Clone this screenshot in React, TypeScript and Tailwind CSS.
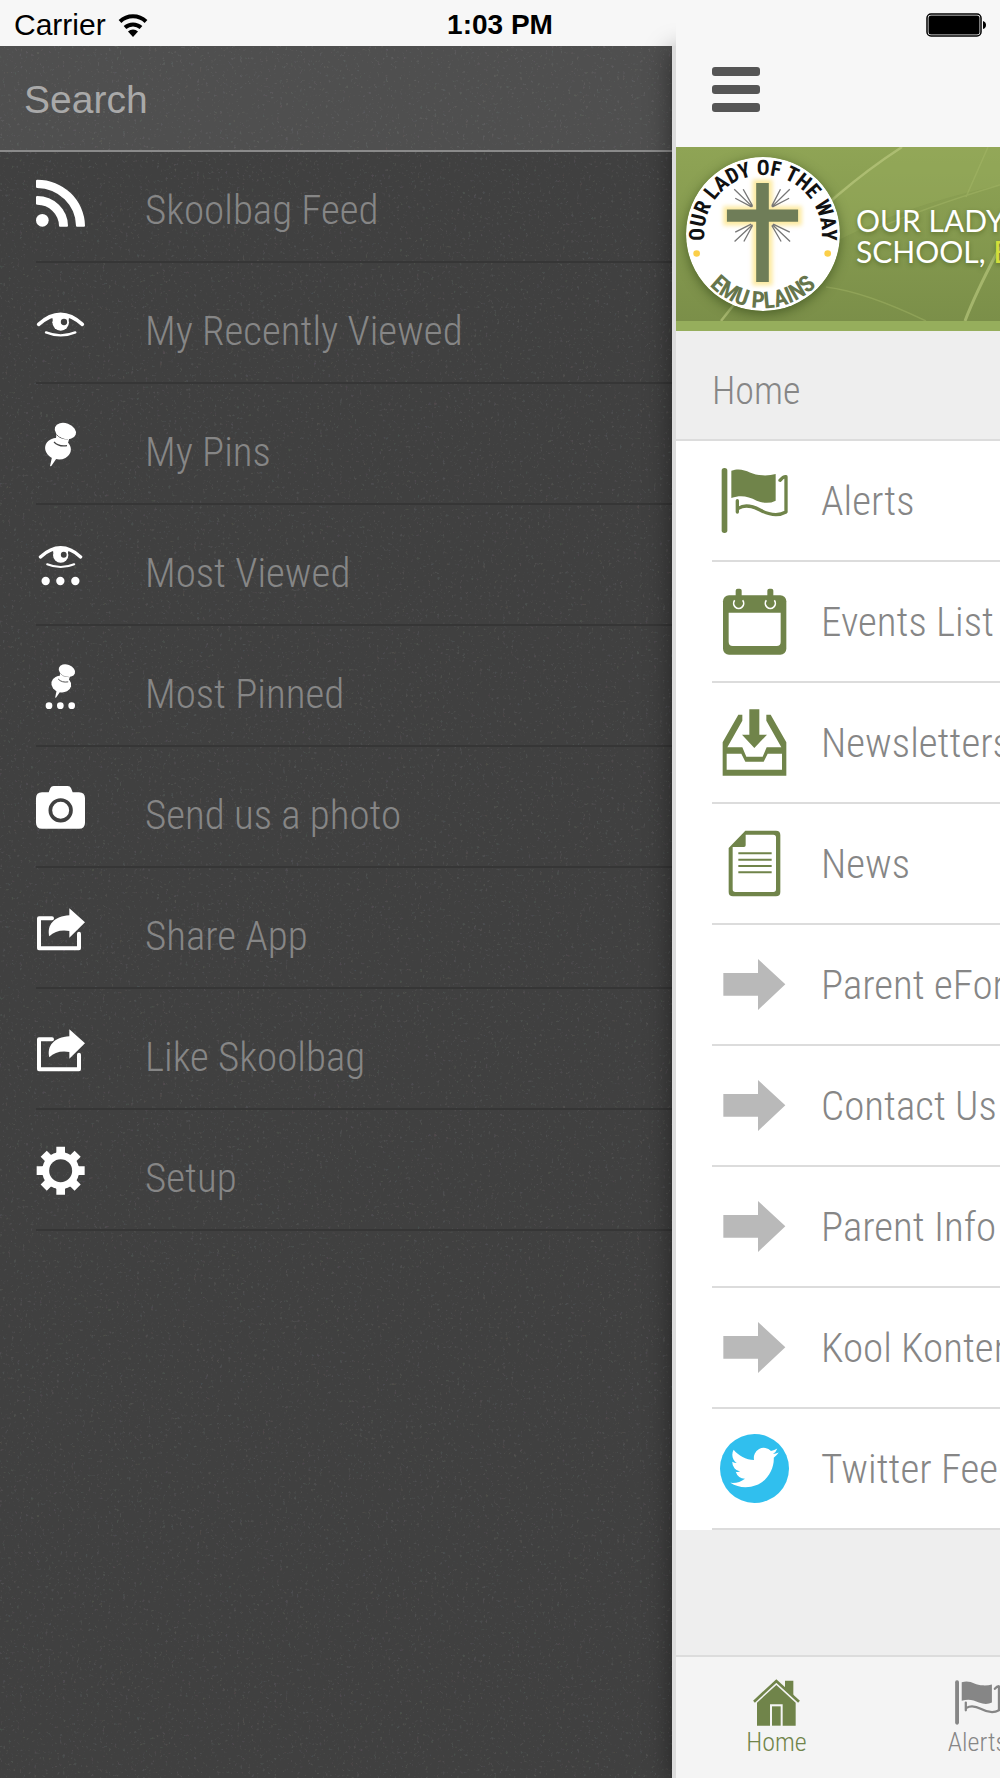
import type { ReactNode } from "react";

type Item = { label: string; icon: ReactNode };

const MenuSvg = ({ children }: { children: ReactNode }) => (
  <svg viewBox="0 0 147 150" className="w-[49px] h-[50px] shrink-0" fill="#fff" aria-hidden="true">
    {children}
  </svg>
);

const ListSvg = ({ children }: { children: ReactNode }) => (
  <svg viewBox="0 0 207 207" className="w-[69px] h-[69px]" fill="#70844a" aria-hidden="true">
    {children}
  </svg>
);

const EyeShape = () => (
  <>
    <path d="M8 79Q74 20 139 79" fill="none" stroke="#fff" strokeWidth="11" strokeLinecap="round" />
    <path d="M47 52Q74 40 101 52L97 68H51z" />
    <circle cx="74" cy="73" r="25" />
    <circle cx="84" cy="72" r="9.5" fill="#404040" />
    <path d="M30 103Q74 121 118 103" fill="none" stroke="#fff" strokeWidth="7" strokeLinecap="round" />
  </>
);

const PinShape = () => (
  <>
    <path d="M48 114L42 142L46 141L62 118z" />
    <ellipse cx="66" cy="89" rx="39" ry="32" transform="rotate(12 66 89)" />
    <path d="M62 40L101 54L94 79Q74 84 52 70L60 58z" />
    <path d="M54 69Q68 84 93 80" fill="none" stroke="#404040" strokeWidth="3.5" />
    <path d="M62 47Q72 60 96 60" fill="none" stroke="#404040" strokeWidth="2.5" />
    <ellipse cx="88" cy="36" rx="33" ry="23" transform="rotate(20 88 36)" />
  </>
);

const RssIcon = () => (
  <MenuSvg>
    <circle cx="19" cy="130" r="19" />
    <path d="M0 11q0-3 4-3A143 141 0 0 1 147 146q0 3-3 3h-21q-3 0-3-3A117 114 0 0 0 4 33q-4 0-4-3z" />
    <path d="M0 60q0-3 4-3A92 90 0 0 1 96 146q0 3-3 3h-21q-3 0-3-3A66 64 0 0 0 4 83q-4 0-4-3z" />
  </MenuSvg>
);

const EyeIcon = () => (
  <MenuSvg>
    <EyeShape />
  </MenuSvg>
);

const PinIcon = () => (
  <MenuSvg>
    <PinShape />
  </MenuSvg>
);

const MostViewedIcon = () => (
  <MenuSvg>
    <g transform="translate(6 -22) scale(.92)">
      <EyeShape />
    </g>
    <circle cx="29" cy="123" r="12.5" />
    <circle cx="73" cy="123" r="12.5" />
    <circle cx="118" cy="123" r="12.5" />
  </MenuSvg>
);

const MostPinnedIcon = () => (
  <MenuSvg>
    <g transform="translate(25 1) scale(.77)">
      <PinShape />
    </g>
    <circle cx="39" cy="134" r="10" />
    <circle cx="73" cy="134" r="10" />
    <circle cx="107" cy="134" r="10" />
  </MenuSvg>
);

const CameraIcon = () => (
  <MenuSvg>
    <path d="M18 31H38L43 18Q46 12 53 12H95Q102 12 105 18L110 31H129Q147 31 147 49V122Q147 140 129 140H18Q0 140 0 122V49Q0 31 18 31z" />
    <circle cx="74" cy="85" r="31" stroke="#404040" strokeWidth="11" />
  </MenuSvg>
);

const ShareIcon = () => (
  <MenuSvg>
    <path d="M48 46H9V136H129V92" fill="none" stroke="#fff" strokeWidth="12" strokeLinecap="round" strokeLinejoin="round" />
    <path d="M100 16L147 58L100 104V84Q62 78 40 100C32 66 54 40 100 37z" />
  </MenuSvg>
);

const GearIcon = () => (
  <MenuSvg>
    <circle cx="74" cy="77" r="45" fill="none" stroke="#fff" strokeWidth="21" />
    {[0, 45, 90, 135, 180, 225, 270, 315].map((angle) => (
      <path key={angle} d="M61 5H87V22L93 36H55L61 22z" transform={`rotate(${angle} 74 77)`} />
    ))}
  </MenuSvg>
);

const FlagShape = ({ color }: { color: string }) => (
  <>
    <rect x="5" y="6" width="17" height="195" rx="8" fill={color} />
    <path d="M34 14C74 1 90 28 128 28Q150 29 167 24V104Q142 117 110 104C85 92 64 86 34 96z" fill={color} />
    <path
      d="M180 43Q190 31 198 32V138Q165 156 120 132Q80 111 55 127M52 104V138"
      fill="none"
      stroke={color}
      strokeWidth="10"
      strokeLinecap="round"
      strokeLinejoin="round"
    />
  </>
);

const CalendarIcon = () => (
  <ListSvg>
    <rect x="9" y="25" width="190" height="178" rx="18" />
    <path d="M26 77H182V165Q182 177 170 177H38Q26 177 26 165z" fill="#fff" />
    {[56, 151].map((x) => (
      <g key={x}>
        <path d={`M${x - 12} 40A15 15 0 1 0 ${x + 12} 40`} fill="none" stroke="#fff" strokeWidth="5" />
        <rect x={x - 9} y="5" width="18" height="51" rx="6" />
      </g>
    ))}
  </ListSvg>
);

const InboxIcon = () => (
  <ListSvg>
    <path
      fillRule="evenodd"
      d="M8 103L55 20H67V38L22 118H67L79 146H128L140 118H184L139 38V20H152L199 103V203H8zM20 137V185H186V137H143L131 161H76L64 137z"
    />
    <path d="M88 4H118V80H141L103 120L66 80H88z" />
  </ListSvg>
);

const PaperIcon = () => (
  <ListSvg>
    <path
      fillRule="evenodd"
      d="M76 5H168Q181 5 181 18V189Q181 202 168 202H39Q26 202 26 189V57zM77 17V49Q77 54 72 54H38V181Q38 189 46 189H160Q168 189 168 181V25Q168 17 160 17z"
    />
    <path d="M55 73H155M55 92H155M55 111H155M55 130H155" stroke="#70844a" strokeWidth="6" />
  </ListSvg>
);

const ArrowIcon = () => (
  <ListSvg>
    <path d="M10 69H114V27L196 103L114 180V137H10z" fill="#b9b9b9" />
  </ListSvg>
);

const TwitterIcon = () => (
  <ListSvg>
    <circle cx="103.5" cy="103.5" r="103.5" fill="#30bfee" />
    <path
      transform="translate(31 28) scale(6.05)"
      fill="#fff"
      d="M23.953 4.57a10 10 0 01-2.825.775 4.958 4.958 0 002.163-2.723c-.951.555-2.005.959-3.127 1.184a4.92 4.92 0 00-8.384 4.482C7.69 8.095 4.067 6.13 1.64 3.162a4.822 4.822 0 00-.666 2.475c0 1.71.87 3.213 2.188 4.096a4.904 4.904 0 01-2.228-.616v.06a4.923 4.923 0 003.946 4.827 4.996 4.996 0 01-2.212.085 4.936 4.936 0 004.604 3.417 9.867 9.867 0 01-6.102 2.105c-.39 0-.779-.023-1.17-.067a13.995 13.995 0 007.557 2.209c9.053 0 13.998-7.496 13.998-13.985 0-.21 0-.42-.015-.63A9.935 9.935 0 0024 4.59z"
    />
  </ListSvg>
);

const HouseIcon = () => (
  <svg viewBox="0 0 141 141" className="w-[47px] h-[47px]" fill="#70844a" aria-hidden="true">
    <path d="M96 5H121V54L96 32z" />
    <path d="M3 68L70 6L138 68" fill="none" stroke="#70844a" strokeWidth="8" />
    <path d="M12 71L70 18L128 71V140H89V76H51V140H12z" />
    <path d="M57 82H83V140H57z" />
  </svg>
);

const menuItems: Item[] = [
  { label: "Skoolbag Feed", icon: <RssIcon /> },
  { label: "My Recently Viewed", icon: <EyeIcon /> },
  { label: "My Pins", icon: <PinIcon /> },
  { label: "Most Viewed", icon: <MostViewedIcon /> },
  { label: "Most Pinned", icon: <MostPinnedIcon /> },
  { label: "Send us a photo", icon: <CameraIcon /> },
  { label: "Share App", icon: <ShareIcon /> },
  { label: "Like Skoolbag", icon: <ShareIcon /> },
  { label: "Setup", icon: <GearIcon /> },
];

const homeItems: Item[] = [
  { label: "Alerts", icon: <ListSvg><FlagShape color="#70844a" /></ListSvg> },
  { label: "Events List", icon: <CalendarIcon /> },
  { label: "Newsletters", icon: <InboxIcon /> },
  { label: "News", icon: <PaperIcon /> },
  { label: "Parent eForms", icon: <ArrowIcon /> },
  { label: "Contact Us", icon: <ArrowIcon /> },
  { label: "Parent Info", icon: <ArrowIcon /> },
  { label: "Kool Kontent", icon: <ArrowIcon /> },
  { label: "Twitter Feed", icon: <TwitterIcon /> },
];

const StatusBar = () => (
  <div className="absolute inset-x-0 top-0 z-20 h-[46px] grid grid-cols-3 items-center pt-1 px-[14px] text-black font-normal font-['Liberation_Sans',sans-serif]">
    <div className="flex items-center gap-3 text-[30px] leading-[34px]">
      Carrier
      <svg viewBox="0 0 30 24" className="w-[30px] h-6" fill="none" stroke="#000" strokeWidth="4" aria-hidden="true">
        <path d="M2 8.500A19 19 0 0 1 28 8.500" />
        <path d="M7 14.500A12 12 0 0 1 23 14.500" />
        <path d="M15 24L10 18.500A7.500 7.500 0 0 1 20 18.500z" fill="#000" stroke="none" />
      </svg>
    </div>
    <div className="text-center text-[28px] leading-[34px] font-bold">1:03 PM</div>
    <svg viewBox="0 0 60 24" className="w-[60px] h-6 justify-self-end" aria-hidden="true">
      <rect x="1" y="1" width="54" height="22" rx="4" fill="none" stroke="#000" strokeWidth="1.500" />
      <rect x="2.500" y="2.500" width="51" height="19" rx="2.500" />
      <path d="M57 8Q60 9 60 12T57 16z" />
    </svg>
  </div>
);

const Crest = () => (
  <svg viewBox="0 0 463 463" className="w-[154px] h-[154px] shrink-0 rounded-full shadow-[0_3px_12px_rgba(30,50,10,0.5)]" aria-hidden="true">
    <defs>
      <path id="crest-top" d="M64.500 290A177 177 0 1 1 398.500 290" />
      <path id="crest-bottom" d="M8 231A223 223 0 0 0 455 231" />
      <filter id="glow" x="-30%" y="-30%" width="160%" height="160%">
        <feGaussianBlur stdDeviation="6" />
      </filter>
    </defs>
    <circle cx="231.500" cy="231.500" r="231.500" fill="#fff" />
    <path d="M200 68H260V148H348V206H260V386H200V206H112V148H200z" fill="#fdeaa0" filter="url(#glow)" />
    <path
      d="M200 150L145 97M200 147L172 97M197 150L148 124M258 150L312 97M258 147L284 97M260 150L310 124M200 204L146 254M200 206L174 254M196 202L148 226M260 204L313 254M258 206L286 254M262 202L312 226"
      stroke="#777"
      strokeWidth="4"
    />
    <path d="M211 78H249V158H337V195H249V376H211V195H123V158H211z" fill="#6f7d58" />
    <circle cx="32" cy="290" r="10" fill="#fbcf49" />
    <circle cx="426" cy="290" r="10" fill="#fbcf49" />
    <g className="font-['Roboto_Condensed',Roboto,sans-serif]" fontWeight="700" textAnchor="middle">
      <text fontSize="64" fill="#111">
        <textPath href="#crest-top" startOffset="50%">OUR LADY OF THE WAY</textPath>
      </text>
      <text fontSize="70" fill="#66754c">
        <textPath href="#crest-bottom" startOffset="50%">EMU PLAINS</textPath>
      </text>
    </g>
  </svg>
);

const Banner = () => (
  <div className="relative h-[184px] overflow-hidden border-b-10 border-[#96ae5c] bg-linear-to-b from-[#8fa455] to-[#7b8f49]">
    <svg viewBox="0 0 324 174" preserveAspectRatio="xMinYMin slice" className="absolute inset-0 w-full h-full" fill="none" aria-hidden="true">
      <path d="M150 100Q220 60 324 38V0H226Q180 30 130 70z" fill="#9cb05f" opacity=".35" />
      <path d="M226 0Q130 62 45 174" stroke="#c0cd84" strokeWidth="2.500" opacity=".6" />
      <path d="M289 174Q300 145 324 100" stroke="#b5c47a" strokeWidth="3" opacity=".7" />
      <path d="M190 86Q250 60 324 38M150 140Q190 145 250 174M312 0L290 50" stroke="#a9bb6c" strokeWidth="1.500" opacity=".4" />
    </svg>
    <div className="relative flex items-start gap-4 pl-[10px] pt-[10px]">
      <Crest />
      <h1 className="pt-12 whitespace-nowrap text-white font-normal text-[30px] leading-[31px] font-['Lato',sans-serif] [text-shadow:0_2px_4px_rgba(60,80,20,0.5)]">
        OUR LADY OF THE WAY
        <br />
        SCHOOL, <span className="text-[#d3de3a]">EMU PLAINS</span>
      </h1>
    </div>
  </div>
);

const Drawer = () => (
  <aside className="relative flex-1 min-w-0 mt-[46px] bg-[#404040]">
    <svg className="absolute inset-0 w-full h-full opacity-10" aria-hidden="true">
      <filter id="grain">
        <feTurbulence type="fractalNoise" baseFrequency=".35" numOctaves="2" seed="4" />
        <feColorMatrix values="1 0 0 0 0  0 1 0 0 0  0 0 1 0 0  0 0 0 6 -3.7" />
      </filter>
      <rect width="100%" height="100%" filter="url(#grain)" />
    </svg>
    <div className="relative">
      <input
        type="search"
        aria-label="Search"
        placeholder="Search"
        className="block w-full h-[106px] pl-6 pt-1 bg-white/8 border-b-2 border-[#8a8a8a] outline-none text-white placeholder:text-[#a9a9a9] text-[39px] font-normal font-['Liberation_Sans',sans-serif]"
      />
      <nav className="-mt-[10px] pl-9">
        {menuItems.map((item) => (
          <a key={item.label} href="#" className="flex items-center gap-[60px] h-[121px] border-b-2 border-[#363636] text-[#868686]">
            {item.icon}
            <span className="pt-4 text-[41px] leading-[48px] whitespace-nowrap">{item.label}</span>
          </a>
        ))}
      </nav>
    </div>
  </aside>
);

export default function App() {
  return (
    <div className="relative flex min-h-screen overflow-hidden bg-[#f7f7f7] font-light font-['Roboto_Condensed',Roboto,sans-serif]">
      <StatusBar />
      <Drawer />

      <main className="relative z-10 w-[32.8%] flex flex-col">
        <div className="relative z-10 h-[46px] ml-1 bg-[#f7f7f7]" />
        <div className="flex-1 flex flex-col min-w-0 border-l-4 border-[#dcdcdc] bg-[#eee] overflow-hidden shadow-[-2px_4px_24px_rgba(0,0,0,0.4)]">
          <header className="h-[101px] pl-9 pt-[21px] bg-[#f7f7f7]">
            <button type="button" aria-label="Toggle menu" className="flex flex-col gap-[9px] w-12">
              <span className="h-[9px] rounded-[3px] bg-[#555]" />
              <span className="h-[9px] rounded-[3px] bg-[#555]" />
              <span className="h-[9px] rounded-[3px] bg-[#555]" />
            </button>
          </header>

          <Banner />

          <h2 className="h-[110px] pl-9 pt-9 border-b-2 border-[#dcdcdc] text-[38px] leading-[48px] text-[#868686]">Home</h2>

          <nav className="pl-9 bg-white">
            {homeItems.map((item) => (
              <a key={item.label} href="#" className="flex items-center h-[121px] border-b-2 border-[#dcdcdc] text-[#868686]">
                <span className="w-[85px] shrink-0 flex justify-center">{item.icon}</span>
                <span className="pl-6 text-[41px] leading-[48px] whitespace-nowrap">{item.label}</span>
              </a>
            ))}
          </nav>

          {/* Tab bar */}
          <nav className="mt-auto h-[123px] flex border-t-2 border-[#dcdcdc] bg-[#f4f4f4] text-[26px] leading-8 text-[#868686]">
            <a href="#" className="w-[201px] shrink-0 flex flex-col items-center pt-[22px] text-[#70844a]">
              <HouseIcon />
              Home
            </a>
            <a href="#" className="w-[201px] shrink-0 flex flex-col items-center pt-[22px]">
              <svg viewBox="0 0 207 207" className="w-[49px] h-[47px]" aria-hidden="true">
                <FlagShape color="#868686" />
              </svg>
              Alerts
            </a>
          </nav>
        </div>
      </main>
    </div>
  );
}
